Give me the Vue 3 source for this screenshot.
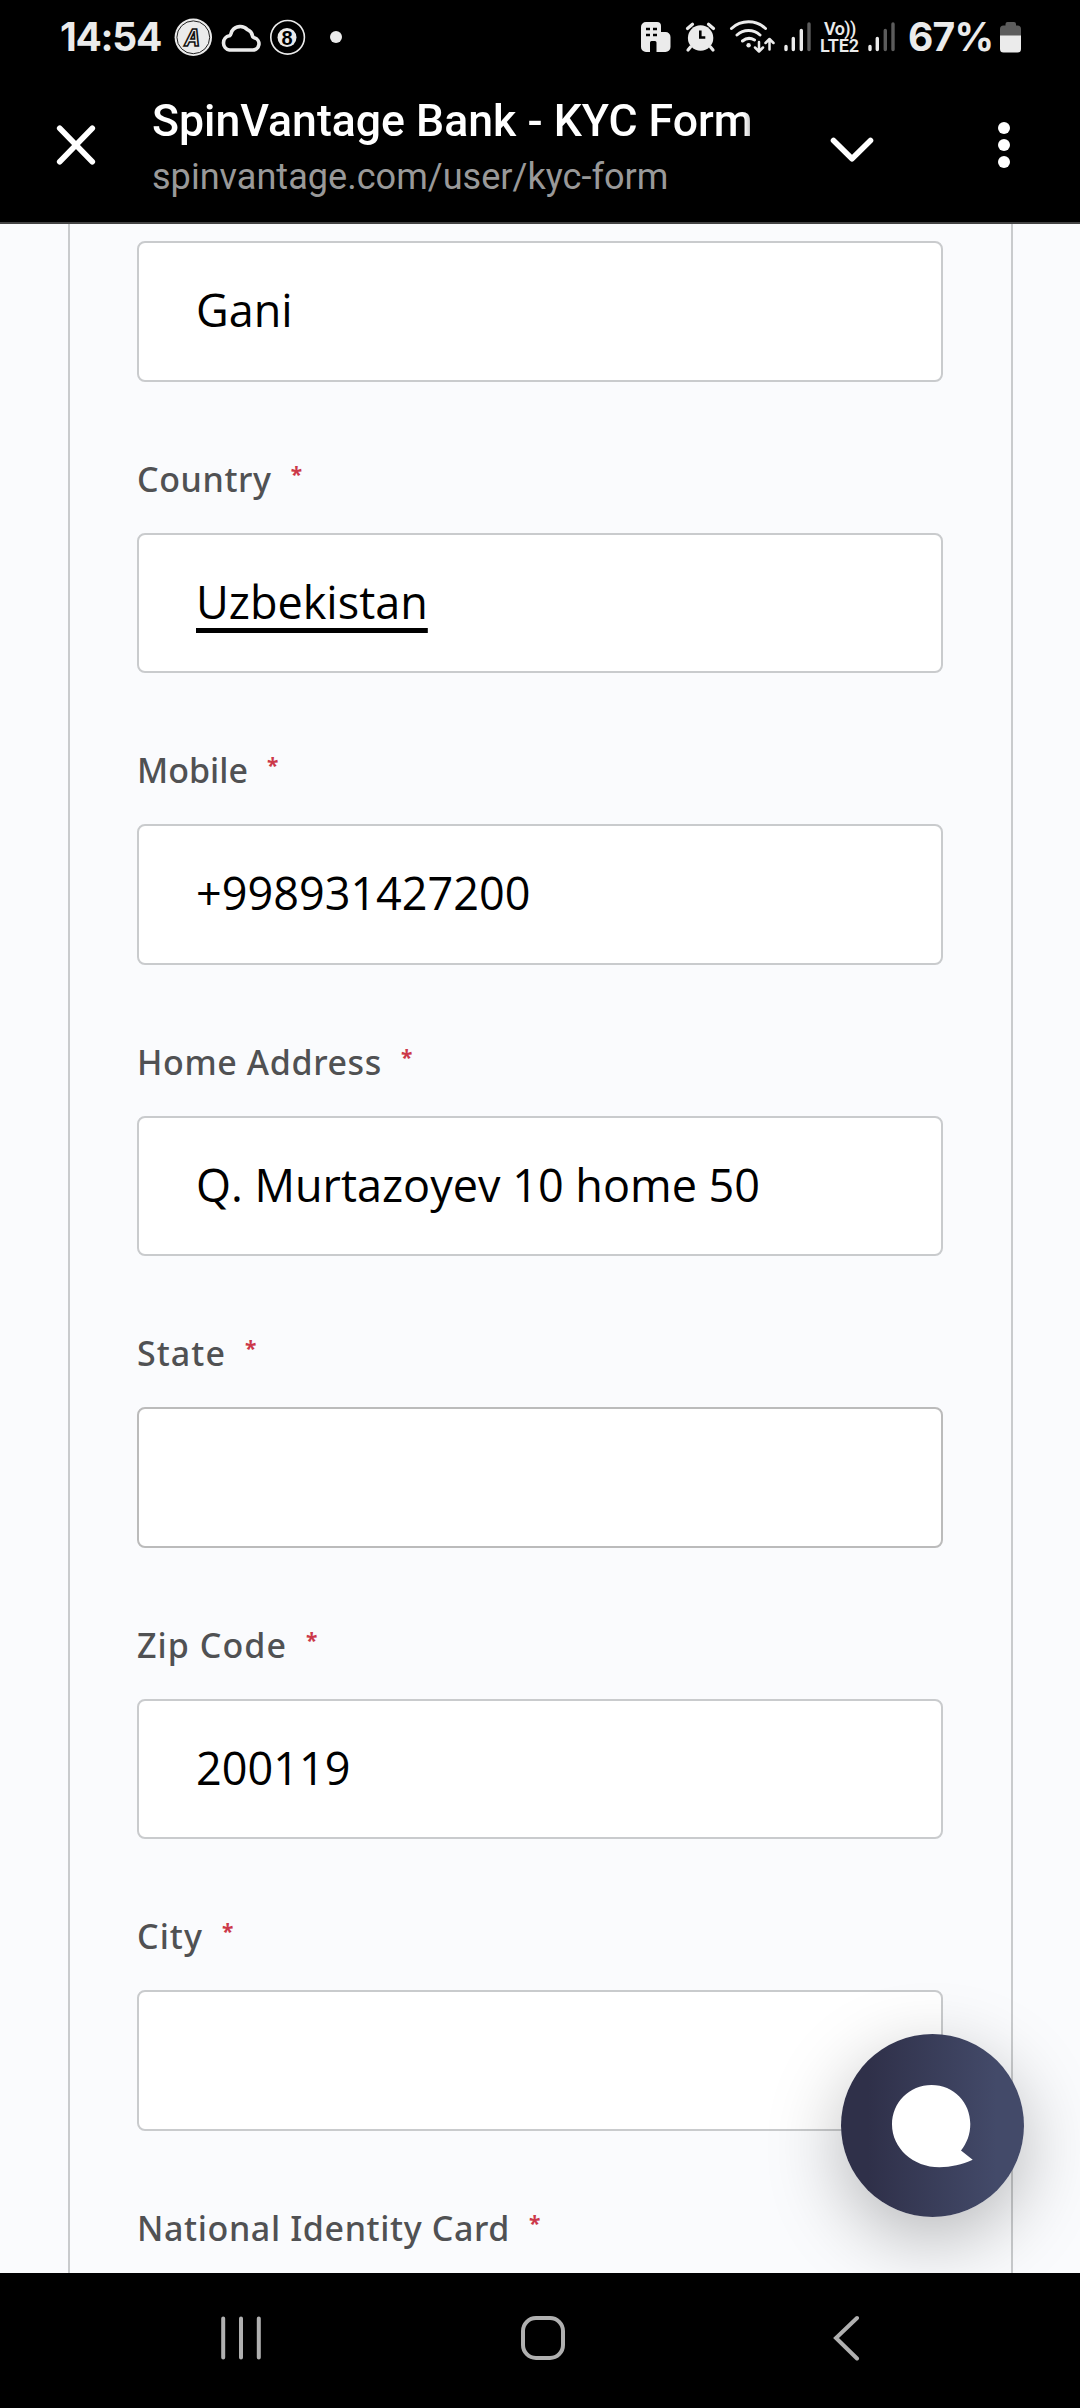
<script setup>
const fields = [
  { label: '', value: 'Gani' },
  { label: 'Country', value: 'Uzbekistan', underlined: true, cls: 'mid' },
  { label: 'Mobile', value: '+998931427200' },
  { label: 'Home Address', value: 'Q. Murtazoyev 10 home 50', cls: 'mid' },
  { label: 'State', value: '', active: true, cls: 'wide' },
  { label: 'Zip Code', value: '200119', cls: 'wide' },
  { label: 'City', value: '', cls: 'wide' },
]
</script>

<template>
  <div class="screen">
    <header class="top">
      <div class="status">
        <span class="clock">14:54</span>
        <svg class="badge-a" width="38" height="80" viewBox="174 0 38 80">
          <circle cx="193.3" cy="37.3" r="18.7" fill="#ebebeb" />
          <circle cx="193.3" cy="37.3" r="16.4" fill="none" stroke="#222" stroke-width="1" />
          <text x="192.500" y="45.500" text-anchor="middle" class="glyph-a">A</text>
        </svg>
        <svg class="cloud" width="40" height="80" viewBox="221 0 40 80">
          <path d="M229.5 50.2h23a6.2 6.2 0 0 0 1.8-12.2c-1-.3-1.9-.8-1.9-2.2a8 8 0 0 0-4.9-5.9 10 10 0 0 0-15.5 1.2c-1 1.9-.8 4.1-2.5 4.9a7.200 7.200 0 0 0 0 14.200z" transform="translate(0 -.2)" fill="none" stroke="#ebebeb" stroke-width="3.6" stroke-linejoin="round" />
        </svg>
        <svg class="eight" width="36" height="80" viewBox="270 0 36 80">
          <circle cx="287.6" cy="37.3" r="16.8" fill="none" stroke="#ebebeb" stroke-width="1.6" />
          <circle cx="287" cy="37.5" r="9.5" fill="#ebebeb" />
          <text x="287" y="44.8" text-anchor="middle" class="glyph-8">8</text>
        </svg>
        <i class="more-dot"></i>
        <span class="spacer"></span>
        <svg width="30" height="80" viewBox="641 0 30 80">
          <path fill="#ebebeb" fill-rule="evenodd" d="M646 22h11a4 4 0 0 1 4 4v6h4.500a5 5 0 0 1 5 5v10a5 5 0 0 1-5 5h-9v-9.500a1.500 1.500 0 0 0-1.500-1.500h-3.500a1.500 1.500 0 0 0-1.500 1.500V52H646a5 5 0 0 1-5-5V27a5 5 0 0 1 5-5zM646 27.700v2.600h4v-2.600zM653 27.700v2.600h4v-2.600zM646 33.700v2.600h4v-2.600zM653 33.700v2.600h4v-2.600z" />
        </svg>
        <svg class="alarm" width="32" height="80" viewBox="685 0 32 80">
          <circle cx="700.6" cy="38" r="12.7" fill="#ebebeb" />
          <path d="M687.5 28.5l5-4.200M713.500 28.500l-5-4.200M690.500 47l-2.500 3M710.500 47l2.500 3" stroke="#ebebeb" stroke-width="3.2" stroke-linecap="round" />
          <path d="M700.3 30.5v7h5" fill="none" stroke="#000" stroke-width="2.6" />
        </svg>
        <svg class="wifi" width="46" height="80" viewBox="729 0 46 80">
          <g fill="none" stroke="#ebebeb" stroke-width="3" stroke-linecap="round" stroke-linejoin="round">
            <path d="M731.500 28.500a25 25 0 0 1 34 0M737 35a17 17 0 0 1 23 0M742.500 41a10.500 10.500 0 0 1 12-1" />
            <path d="M759 42v9m-4-3.500l4 4 4-4M769.500 49.500v-10.500m-4 4l4-4 4 4" stroke-width="2.5" />
          </g>
          <circle cx="748.6" cy="45.3" r="2.2" fill="#ebebeb" />
        </svg>
        <svg class="sig" width="27" height="80" viewBox="784 0 27 80">
          <g stroke-width="3.4" stroke-linecap="round"><path stroke="#ebebeb" d="M786 46.500v3M793.300 38.500v11M801.300 30.500v19" /><path stroke="#5c5c5c" d="M809 24v25.500" /></g>
        </svg>
        <span class="volte"><b>Vo))</b><b>LTE2</b></span>
        <svg class="sig2" width="28" height="80" viewBox="868 0 28 80">
          <g stroke-width="3.4" stroke-linecap="round"><path stroke="#ebebeb" d="M870 46.500v3M877.300 38.500v11" /><path stroke="#5c5c5c" d="M885.300 30.500v19M893 24v25.500" /></g>
        </svg>
        <span class="pct">67%</span>
        <svg class="battery" width="21" height="80" viewBox="1000 0 21 80">
          <path fill="#5c5c5c" d="M1005.500 25.500v-1.500a2 2 0 0 1 2-2h6.500a2 2 0 0 1 2 2v1.500h1.500a3.500 3.500 0 0 1 3.500 3.500v7h-21v-7a3.500 3.500 0 0 1 3.500-3.500z" />
          <path fill="#ebebeb" d="M1000 35.500h21v13.500a3.500 3.500 0 0 1-3.500 3.500h-14a3.500 3.500 0 0 1-3.500-3.500z" />
        </svg>
      </div>
      <div class="bar">
        <svg class="close" width="44" height="44" viewBox="-22 -22 44 44"><path d="M-16.300 -16.700L16.300 16.700M16.300 -16.700L-16.300 16.700" stroke="#fff" stroke-width="5.6" stroke-linecap="round" /></svg>
        <div class="heading">
          <div class="title">SpinVantage Bank - KYC Form</div>
          <div class="url">spinvantage.com/user/kyc-form</div>
        </div>
        <svg class="chev" width="44" height="44" viewBox="-22 -22 44 44"><path d="M-18.500 -6.500L0 11.700 18.500 -6.500" fill="none" stroke="#fff" stroke-width="5.6" stroke-linecap="round" stroke-linejoin="round" /></svg>
        <svg class="kebab" width="12" height="48" viewBox="-6 -24 12 48" fill="#fff"><circle cy="-17" r="6" /><circle r="6" /><circle cy="17" r="6" /></svg>
      </div>
    </header>
    <main class="page">
      <form class="card" @submit.prevent>
        <div v-for="f in fields" :key="f.label" class="field">
          <label v-if="f.label" class="label" :class="f.cls"><span>{{ f.label }}</span><span class="star">*</span></label>
          <div class="value" :class="{ active: f.active }"><span :class="{ underlined: f.underlined }">{{ f.value }}</span></div>
        </div>
        <div class="field"><label class="label mid"><span>National Identity Card</span><span class="star">*</span></label></div>
      </form>
      <button class="chat" type="button" aria-label="Chat">
        <svg width="183" height="183" viewBox="0 0 183 183"><path fill="#fff" d="M90.500 51C113 51 129.300 68.500 129.300 90c0 10.500-3.500 19-9.300 26.500L131.700 125.800C121 130.500 110 133.300 98.500 133.300 72 133.300 51 114 51 90.500 51 68.500 68.500 51 90.500 51z" /></svg>
      </button>
    </main>
    <nav class="nav">
      <svg width="40" height="46" viewBox="0 0 40 46"><path d="M2.200 3.500v39M20 3.500v39M37.800 3.500v39" stroke="#b0b0b0" stroke-width="4" stroke-linecap="round" /></svg>
      <svg class="home" width="44" height="46" viewBox="0 0 44 46"><rect x="2" y="3" width="40" height="40" rx="13" fill="none" stroke="#b0b0b0" stroke-width="4" /></svg>
      <svg width="27" height="46" viewBox="0 0 27 46"><path d="M24 3L3 23l21 20.500" fill="none" stroke="#b0b0b0" stroke-width="4" stroke-linecap="round" /></svg>
    </nav>
  </div>
</template>

<style>
body { margin: 0; background: #000; }
</style>
<style scoped>
* { box-sizing: border-box; }
svg { display: block; flex: none; }
.screen { width: 1080px; height: 2408px; display: flex; flex-direction: column; overflow: hidden; background: #000; }
.top { height: 224px; flex: none; border-bottom: 2px solid #444; color: #fff; }
.status { height: 74px; display: flex; padding: 0 59px 0 60px; color: #ebebeb; overflow: hidden; }
.clock, .pct { font: 700 39px/74px Inter, sans-serif; white-space: nowrap; flex: none; }
.clock { width: 114px; letter-spacing: -1.3px; }
.pct { width: 90px; margin-left: 12px; margin-right: 2px; letter-spacing: -.8px; }
.glyph-a { font: italic 700 23px "Open Sans", sans-serif; fill: #ebebeb; stroke: #111; stroke-width: 1.6px; }
.glyph-8 { font: 700 20px "Liberation Sans", sans-serif; fill: #000; }
.cloud, .eight { margin-left: 9px; }
.more-dot { width: 12px; height: 12px; border-radius: 50%; background: #ebebeb; margin: 31px 0 0 24px; flex: none; }
.spacer { flex: 1; }
.alarm { margin-left: 14px; }
.wifi { margin-left: 12px; }
.sig { margin-left: 9px; }
.volte { width: 48px; margin-left: 9px; padding-top: 20px; display: flex; flex-direction: column; font: 18px/17px Roboto, sans-serif; flex: none; }
.volte b { font-weight: 600; }
.volte b:first-child { padding-left: 4px; letter-spacing: -.6px; }
.bar { display: flex; height: 148px; }
.close { margin: 49px 0 0 54px; }
.heading { width: 604px; margin-left: 54px; white-space: nowrap; }
.title { font: 500 44.6px/52px Roboto, sans-serif; margin-top: 21px; -webkit-mask-image: linear-gradient(90deg, #000 98%, rgba(0,0,0,.6)); }
.url { font: 400 36.1px/42px Roboto, sans-serif; margin-top: 9px; color: #999; }
.chev { margin: 51px 0 0 74px; }
.kebab { margin: 47px 0 0 124px; }
.page { height: 2049px; flex: none; position: relative; overflow: hidden; background: #fafbfd; padding: 0 67px 0 68px; }
.card { height: 100%; border: solid #c9cbcd; border-width: 0 2px; padding: 0 68px 0 67px; overflow: hidden; display: flex; flex-direction: column; }
.field { height: 291.5px; flex: none; }
.field:first-child { height: 140.5px; margin-top: 17px; }
.label { height: 151px; display: flex; color: #505153; font: 500 34px/48px "Noto Sans", sans-serif; padding-top: 73px; white-space: nowrap; }
.label.mid { letter-spacing: .62px; }
.label.wide { letter-spacing: 1.05px; }
.star { color: #cc3849; font: 700 21px/24px "Noto Sans", sans-serif; margin: 7px 0 0 19px; }
.value { height: 140.5px; border: 2px solid #c9cbcd; border-radius: 8px; background: #fff; color: #000; padding-left: 57px; font: 400 45px/134px "Open Sans", sans-serif; white-space: nowrap; }
.value.active { border-color: #bbb; }
.underlined { text-decoration: underline 5px; text-underline-offset: 9px; text-decoration-skip-ink: none; }
.chat { position: absolute; left: 841px; top: 1810px; width: 183px; height: 183px; border: 0; padding: 0; border-radius: 50%; background: linear-gradient(90deg, #2f3049 15%, #434a69 85%); box-shadow: 0 22px 75px rgba(0,0,0,.27); }
.nav { height: 135px; flex: none; display: flex; align-items: flex-start; justify-content: space-between; padding: 42px 220px 0 221px; }
.home { margin-right: 8px; }
</style>
